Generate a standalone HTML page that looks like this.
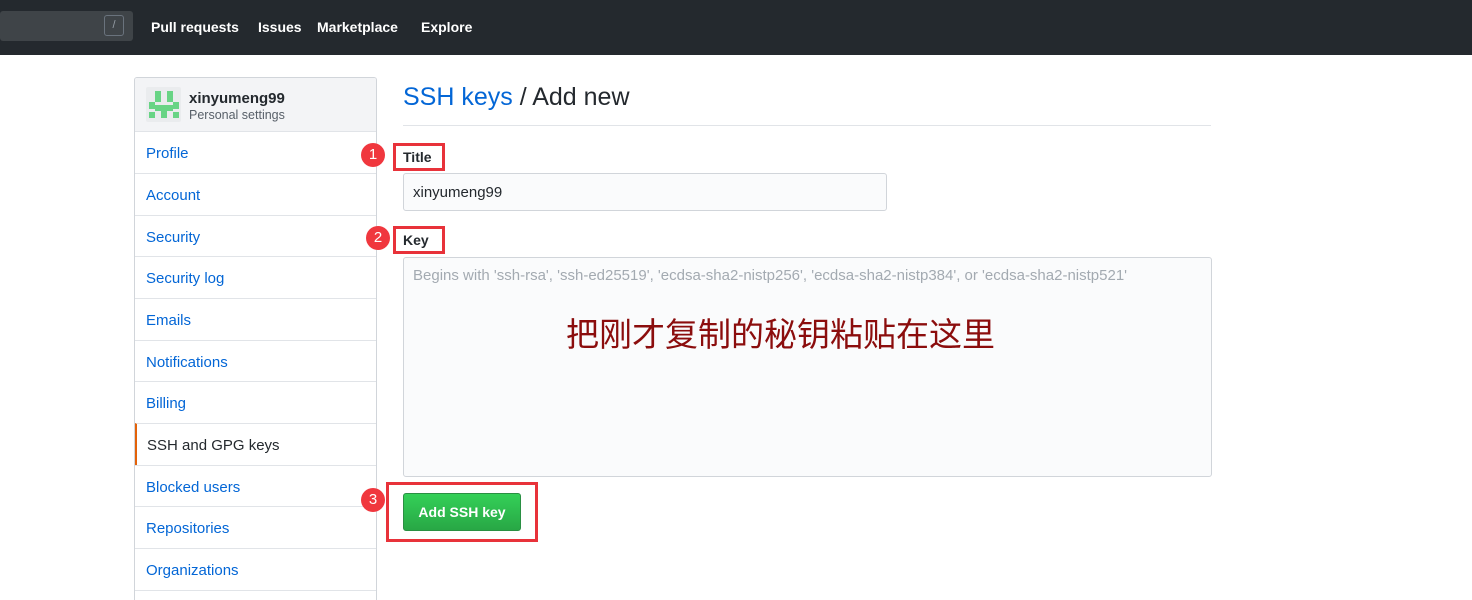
<!DOCTYPE html>
<html style="width:1472px;height:600px;overflow:hidden"><head><meta charset="utf-8"><style>
*{box-sizing:border-box;margin:0;padding:0}
body{width:1472px;height:600px;overflow:hidden;background:#fff;font-family:"Liberation Sans","Noto Sans CJK SC",sans-serif;color:#24292e;position:relative}
.a{position:absolute}
.nav{left:0;top:0;width:1472px;height:55px;background:#24292e}
.nav b{position:absolute;top:19px;color:#fff;font-size:14px}
.sb{left:134px;top:77px;width:243px;height:523px;border:1px solid #d1d5da;border-bottom:none;border-radius:3px 3px 0 0;overflow:hidden}
.it{position:absolute;left:0;width:241px;height:42px;border-top:1px solid #e1e4e8;padding:13px 11px;font-size:15px;color:#0366d6}
.red{border:3px solid #e8323a}
.c{width:24px;height:24px;border-radius:50%;background:#f0373e;color:#fff;font-size:15px;text-align:center;line-height:24px}
</style></head><body>
<div class="a nav">
<div class="a" style="left:0;top:11px;width:133px;height:30px;background:#3f4448;border-radius:3px"></div>
<div class="a" style="left:104px;top:15px;width:20px;height:21px;border:1px solid #6a737d;border-radius:3px;color:#959da5;font-size:11px;text-align:center;line-height:19px">/</div>
<b style="left:151px">Pull requests</b><b style="left:258px">Issues</b><b style="left:317px">Marketplace</b><b style="left:421px">Explore</b>
</div>
<div class="a sb">
<div class="a" style="left:0;top:0;width:241px;height:54px;background:#f3f4f6"></div>
<svg class="a" style="left:11px;top:9px;width:35px;height:35px" width="35" height="35" viewBox="0 0 35 35"><rect width="35" height="35" rx="2" fill="#eaecee"/><g fill="#68d485"><rect x="9" y="4" width="6" height="11"/><rect x="21" y="4" width="6" height="11"/><rect x="3" y="15" width="6" height="7"/><rect x="27" y="15" width="6" height="7"/><rect x="9" y="18" width="18" height="6"/><rect x="3" y="25" width="6" height="6"/><rect x="15" y="24" width="6" height="7"/><rect x="27" y="25" width="6" height="6"/></g></svg>
<div class="a" style="left:54px;top:12px;font-size:15px;font-weight:bold">xinyumeng99</div>
<div class="a" style="left:54px;top:30px;font-size:12.5px;color:#586069">Personal settings</div>
<div class="it" style="top:53px">Profile</div>
<div class="it" style="top:95px">Account</div>
<div class="it" style="top:137px">Security</div>
<div class="it" style="top:178px">Security log</div>
<div class="it" style="top:220px">Emails</div>
<div class="it" style="top:262px">Notifications</div>
<div class="it" style="top:303px">Billing</div>
<div class="it" style="top:345px;color:#24292e;border-left:2px solid #e36209;padding-left:10px">SSH and GPG keys</div>
<div class="it" style="top:387px">Blocked users</div>
<div class="it" style="top:428px">Repositories</div>
<div class="it" style="top:470px">Organizations</div>
<div class="it" style="top:512px;height:10px;padding:0"></div>
</div>
<div class="a" style="left:403px;top:83px;font-size:25px"><span style="color:#0366d6">SSH keys</span> / Add new</div>
<div class="a" style="left:403px;top:125px;width:808px;height:1px;background:#e1e4e8"></div>
<div class="a red" style="left:393px;top:143px;width:52px;height:28px"></div>
<div class="a" style="left:403px;top:149px;font-size:14px;font-weight:bold">Title</div>
<div class="a c" style="left:361px;top:143px">1</div>
<div class="a" style="left:403px;top:173px;width:484px;height:38px;background:#fafbfc;border:1px solid #d1d5da;border-radius:3px;padding:10px 9px;font-size:15px">xinyumeng99</div>
<div class="a red" style="left:393px;top:226px;width:52px;height:28px"></div>
<div class="a" style="left:403px;top:232px;font-size:14px;font-weight:bold">Key</div>
<div class="a c" style="left:366px;top:226px">2</div>
<div class="a" style="left:403px;top:257px;width:809px;height:220px;background:#fafbfc;border:1px solid #d1d5da;border-radius:3px;padding:9px 9px;font-size:15px;color:#a3aab1">Begins with 'ssh-rsa', 'ssh-ed25519', 'ecdsa-sha2-nistp256', 'ecdsa-sha2-nistp384', or 'ecdsa-sha2-nistp521'</div>
<div class="a" style="left:566px;top:312px;font-size:33px;color:#8b0d0d;font-family:'Noto Sans CJK SC',sans-serif;line-height:40px">把刚才复制的秘钥粘贴在这里</div>
<div class="a red" style="left:386px;top:482px;width:152px;height:60px"></div>
<div class="a" style="left:403px;top:493px;width:118px;height:38px;background:linear-gradient(#34d058,#28a745);border:1px solid #2a8f43;border-radius:3px;color:#fff;font-weight:bold;font-size:14px;text-align:center;line-height:36px">Add SSH key</div>
<div class="a c" style="left:361px;top:488px">3</div>
</body></html>
